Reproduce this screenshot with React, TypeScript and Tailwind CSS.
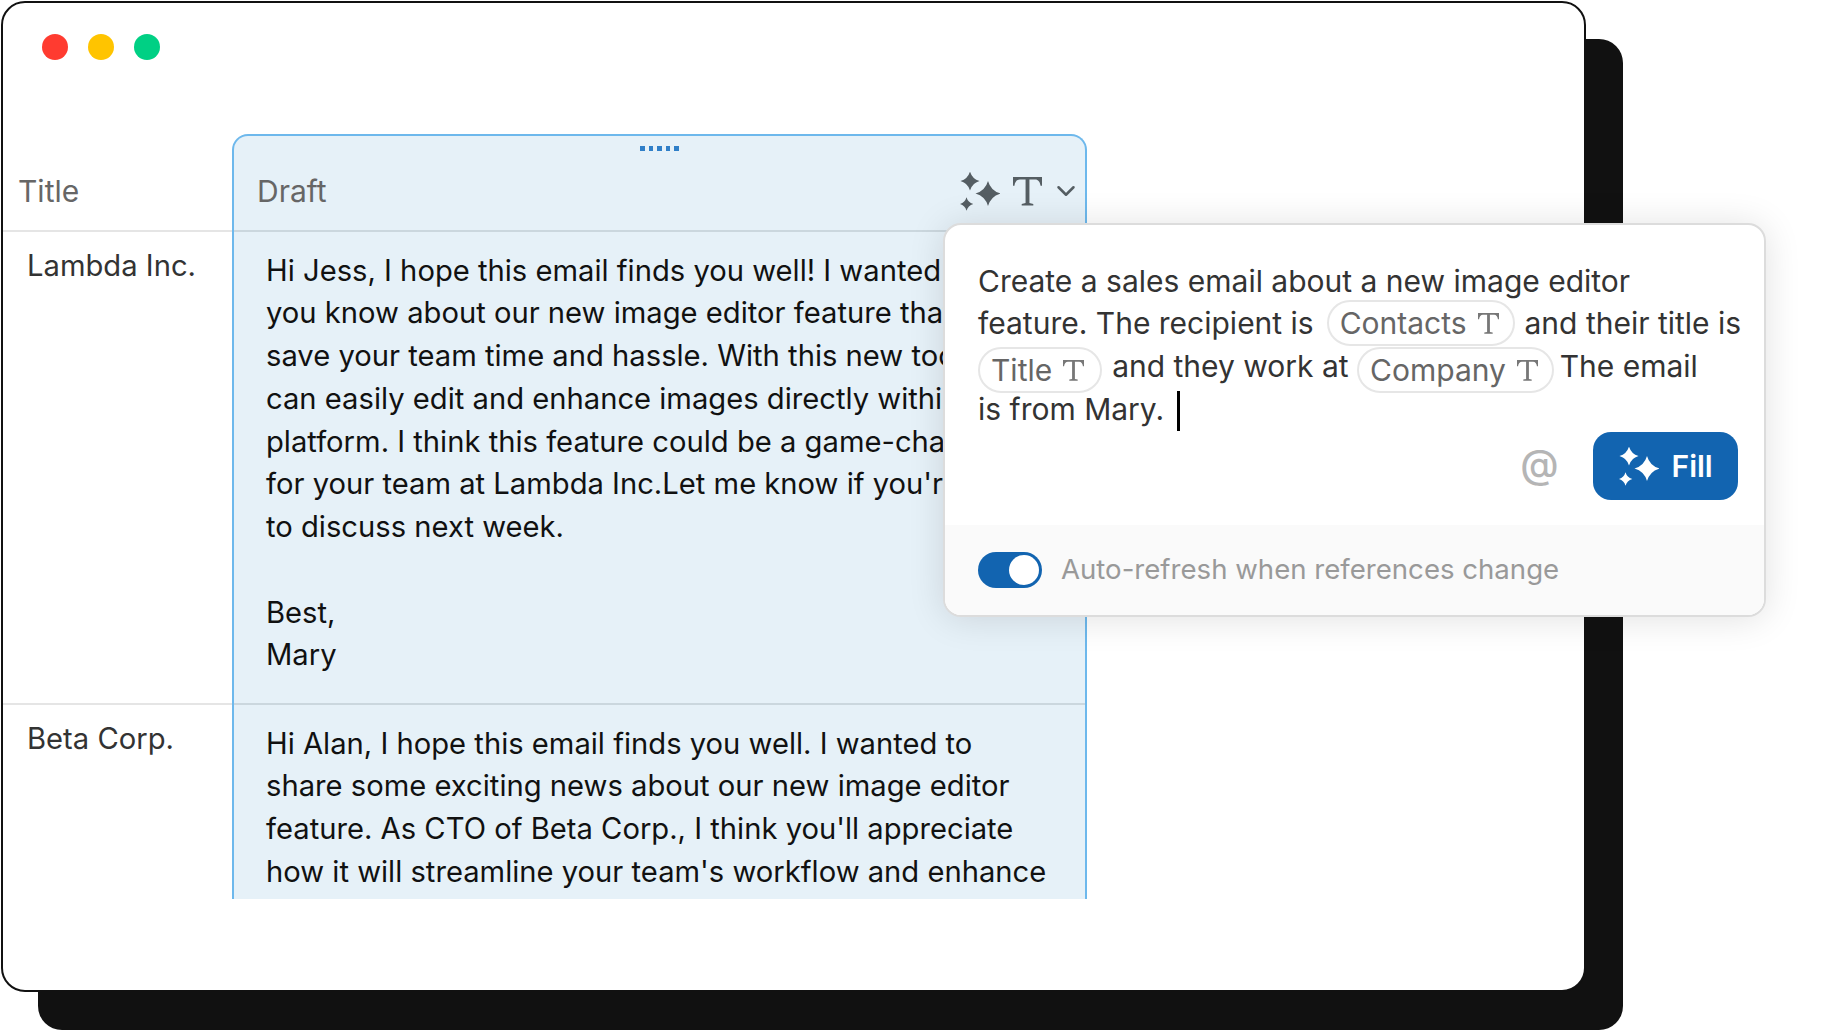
import { ChevronDown } from "lucide-react";

const star = (cx: number, cy: number, r: number) => {
  const k = r * 0.22;
  return `M${cx} ${cy - r}Q${cx + k} ${cy - k} ${cx + r} ${cy}Q${cx + k} ${cy + k} ${cx} ${cy + r}Q${cx - k} ${cy + k} ${cx - r} ${cy}Q${cx - k} ${cy - k} ${cx} ${cy - r}Z`;
};

function Sparkles({ className }: { className?: string }) {
  return (
    <svg viewBox="0 0 40 39" fill="currentColor" className={className}>
      <path d={star(28, 21.5, 12.5)} />
      <path d={star(10, 9, 9.5)} />
      <path d={star(6.5, 32, 6.8)} />
    </svg>
  );
}

function SerifT({ className }: { className?: string }) {
  return (
    <svg viewBox="0 0 30 30" fill="currentColor" className={className}>
      <path d="M0 0H30V9H28.5C28 5 26 2.5 23 2.5H17V27L21 28V29.5H9V28L13 27V2.5H7C4 2.5 2 5 1.5 9H0Z" />
    </svg>
  );
}

function Chip({ label, className }: { label: string; className?: string }) {
  return (
    <span
      className={`inline-flex h-[46px] -my-[4px] items-baseline gap-[11px] rounded-full border-2 border-[#e6e6e6] pl-[11px] leading-[42px] text-[#666] ${className ?? ""}`}
    >
      {label}
      <SerifT className="h-[21px] w-[21px] self-center text-[#777]" />
    </span>
  );
}

export default function App() {
  return (
    <div className="relative h-[1031px] w-[1835px] overflow-hidden bg-white pl-px pt-px font-['Inter',sans-serif] text-[29.2px]">
      <div className="flex h-[991px] w-[1585px] flex-col rounded-[24px] border-2 border-[#111] bg-white shadow-[37px_38px_0_0_#111]">
        <div className="flex h-[131px] shrink-0 items-start gap-5 pl-[39px] pt-[31px]">
          <span className="h-[26px] w-[26px] rounded-full bg-[#ff3b30]" />
          <span className="h-[26px] w-[26px] rounded-full bg-[#ffc400]" />
          <span className="h-[26px] w-[26px] rounded-full bg-[#00d084]" />
        </div>

        <div className="flex h-[765px]">
          <div className="w-[229px] shrink-0 leading-[42.75px] text-[#333]">
            <div className="flex h-[98px] items-center border-b-2 border-[#e5e5e5] pl-[15px] pt-[18px] text-[30px] text-[#666]">Title</div>
            <div className="h-[473px] border-b-2 border-[#e5e5e5] pl-6 pt-[13px]">Lambda Inc.</div>
            <div className="pl-6 pt-[13px]">Beta Corp.</div>
          </div>

          <div className="w-[855px] shrink-0 overflow-hidden rounded-t-[16px] border-x-2 border-t-2 border-[#6db8ec] bg-[#e6f1f8] leading-[42.75px] text-[#111]">
            <div className="flex h-[96px] flex-col border-b-2 border-[#cbd7de]">
              <div className="flex justify-center gap-1 pt-[10px]">
                <span className="h-[5px] w-[4.5px] bg-[#2f7fc8]" />
                <span className="h-[5px] w-[4.5px] bg-[#2f7fc8]" />
                <span className="h-[5px] w-[4.5px] bg-[#2f7fc8]" />
                <span className="h-[5px] w-[4.5px] bg-[#2f7fc8]" />
                <span className="h-[5px] w-[4.5px] bg-[#2f7fc8]" />
              </div>
              <div className="flex items-center pl-[23px] pt-[19px] text-[30px] text-[#666]">
                <span>Draft</span>
                <Sparkles className="ml-auto h-[39px] w-10 text-[#555e63]" />
                <SerifT className="ml-[13px] h-[29px] w-[29px] text-[#555e63]" />
                <ChevronDown className="ml-[9px] mr-[4px] h-[30px] w-[30px] text-[#555e63]" strokeWidth={2} />
              </div>
            </div>
            <div className="h-[473px] whitespace-nowrap border-b-2 border-[#cbd7de] pl-8 pt-[17.5px]">
              Hi Jess, I hope this email finds you well! I wanted to let
              <br />
              you know about our new image editor feature that will
              <br />
              save your team time and hassle. With this new tool, you
              <br />
              can easily edit and enhance images directly within our
              <br />
              platform. I think this feature could be a game-changer
              <br />
              for your team at Lambda Inc.Let me know if you're free
              <br />
              to discuss next week.
              <br />
              <br />
              Best,
              <br />
              Mary
            </div>
            <div className="whitespace-nowrap pl-8 pt-[17.5px]">
              Hi Alan, I hope this email finds you well. I wanted to
              <br />
              share some exciting news about our new image editor
              <br />
              feature. As CTO of Beta Corp., I think you'll appreciate
              <br />
              how it will streamline your team's workflow and enhance
            </div>
          </div>
        </div>
      </div>

      <div className="absolute left-[943px] top-[223px] flex h-[394px] w-[823px] flex-col overflow-hidden rounded-[18px] border-2 border-[#dcdcdc] bg-white shadow-[0_2px_36px_rgba(0,0,0,0.12)]">
        <div className="flex-1 pl-[33px] pt-[34.5px] text-[30px] leading-[42.75px] text-[#333]">
          <div className="h-[42.75px] whitespace-nowrap">Create a sales email about a new image editor</div>
          <div className="h-[42.75px] whitespace-nowrap">
            feature. The recipient is <Chip label="Contacts" className="ml-[4.5px] mr-[1.5px] pr-[14px]" /> and their title is
          </div>
          <div className="h-[42.75px] whitespace-nowrap">
            <Chip label="Title" className="mr-[1.5px] pr-[16px] align-[-4px]" /> and they work at <Chip label="Company" className="-mr-[2.7px] pr-[14px] align-[-4px]" /> The email
          </div>
          <div className="h-[42.75px] whitespace-nowrap">
            is from Mary.
            <span className="ml-[12.5px] inline-block h-[40px] w-[3px] bg-black align-[-11px]" />
          </div>
          <div className="mr-[26.5px] mt-[1.5px] flex items-center justify-end">
            <span className="mb-[5px] mr-[34px] text-[39px] font-medium leading-none text-[#b5b5b5]">@</span>
            <div className="flex h-[68px] w-[145px] items-center gap-[13px] rounded-[18px] bg-[#1264b0] pl-[26px] font-semibold text-white">
              <Sparkles className="h-[39px] w-10" />
              Fill
            </div>
          </div>
        </div>
        <div className="flex h-[90px] shrink-0 items-center gap-[19px] bg-[#fafafa] pl-[33px] text-[27.6px] text-[#999]">
          <div className="flex h-9 w-16 items-center justify-end rounded-full bg-[#1264b0] pr-[3px]">
            <span className="h-[30px] w-[30px] rounded-full bg-white" />
          </div>
          <span>Auto-refresh when references change</span>
        </div>
      </div>
    </div>
  );
}
